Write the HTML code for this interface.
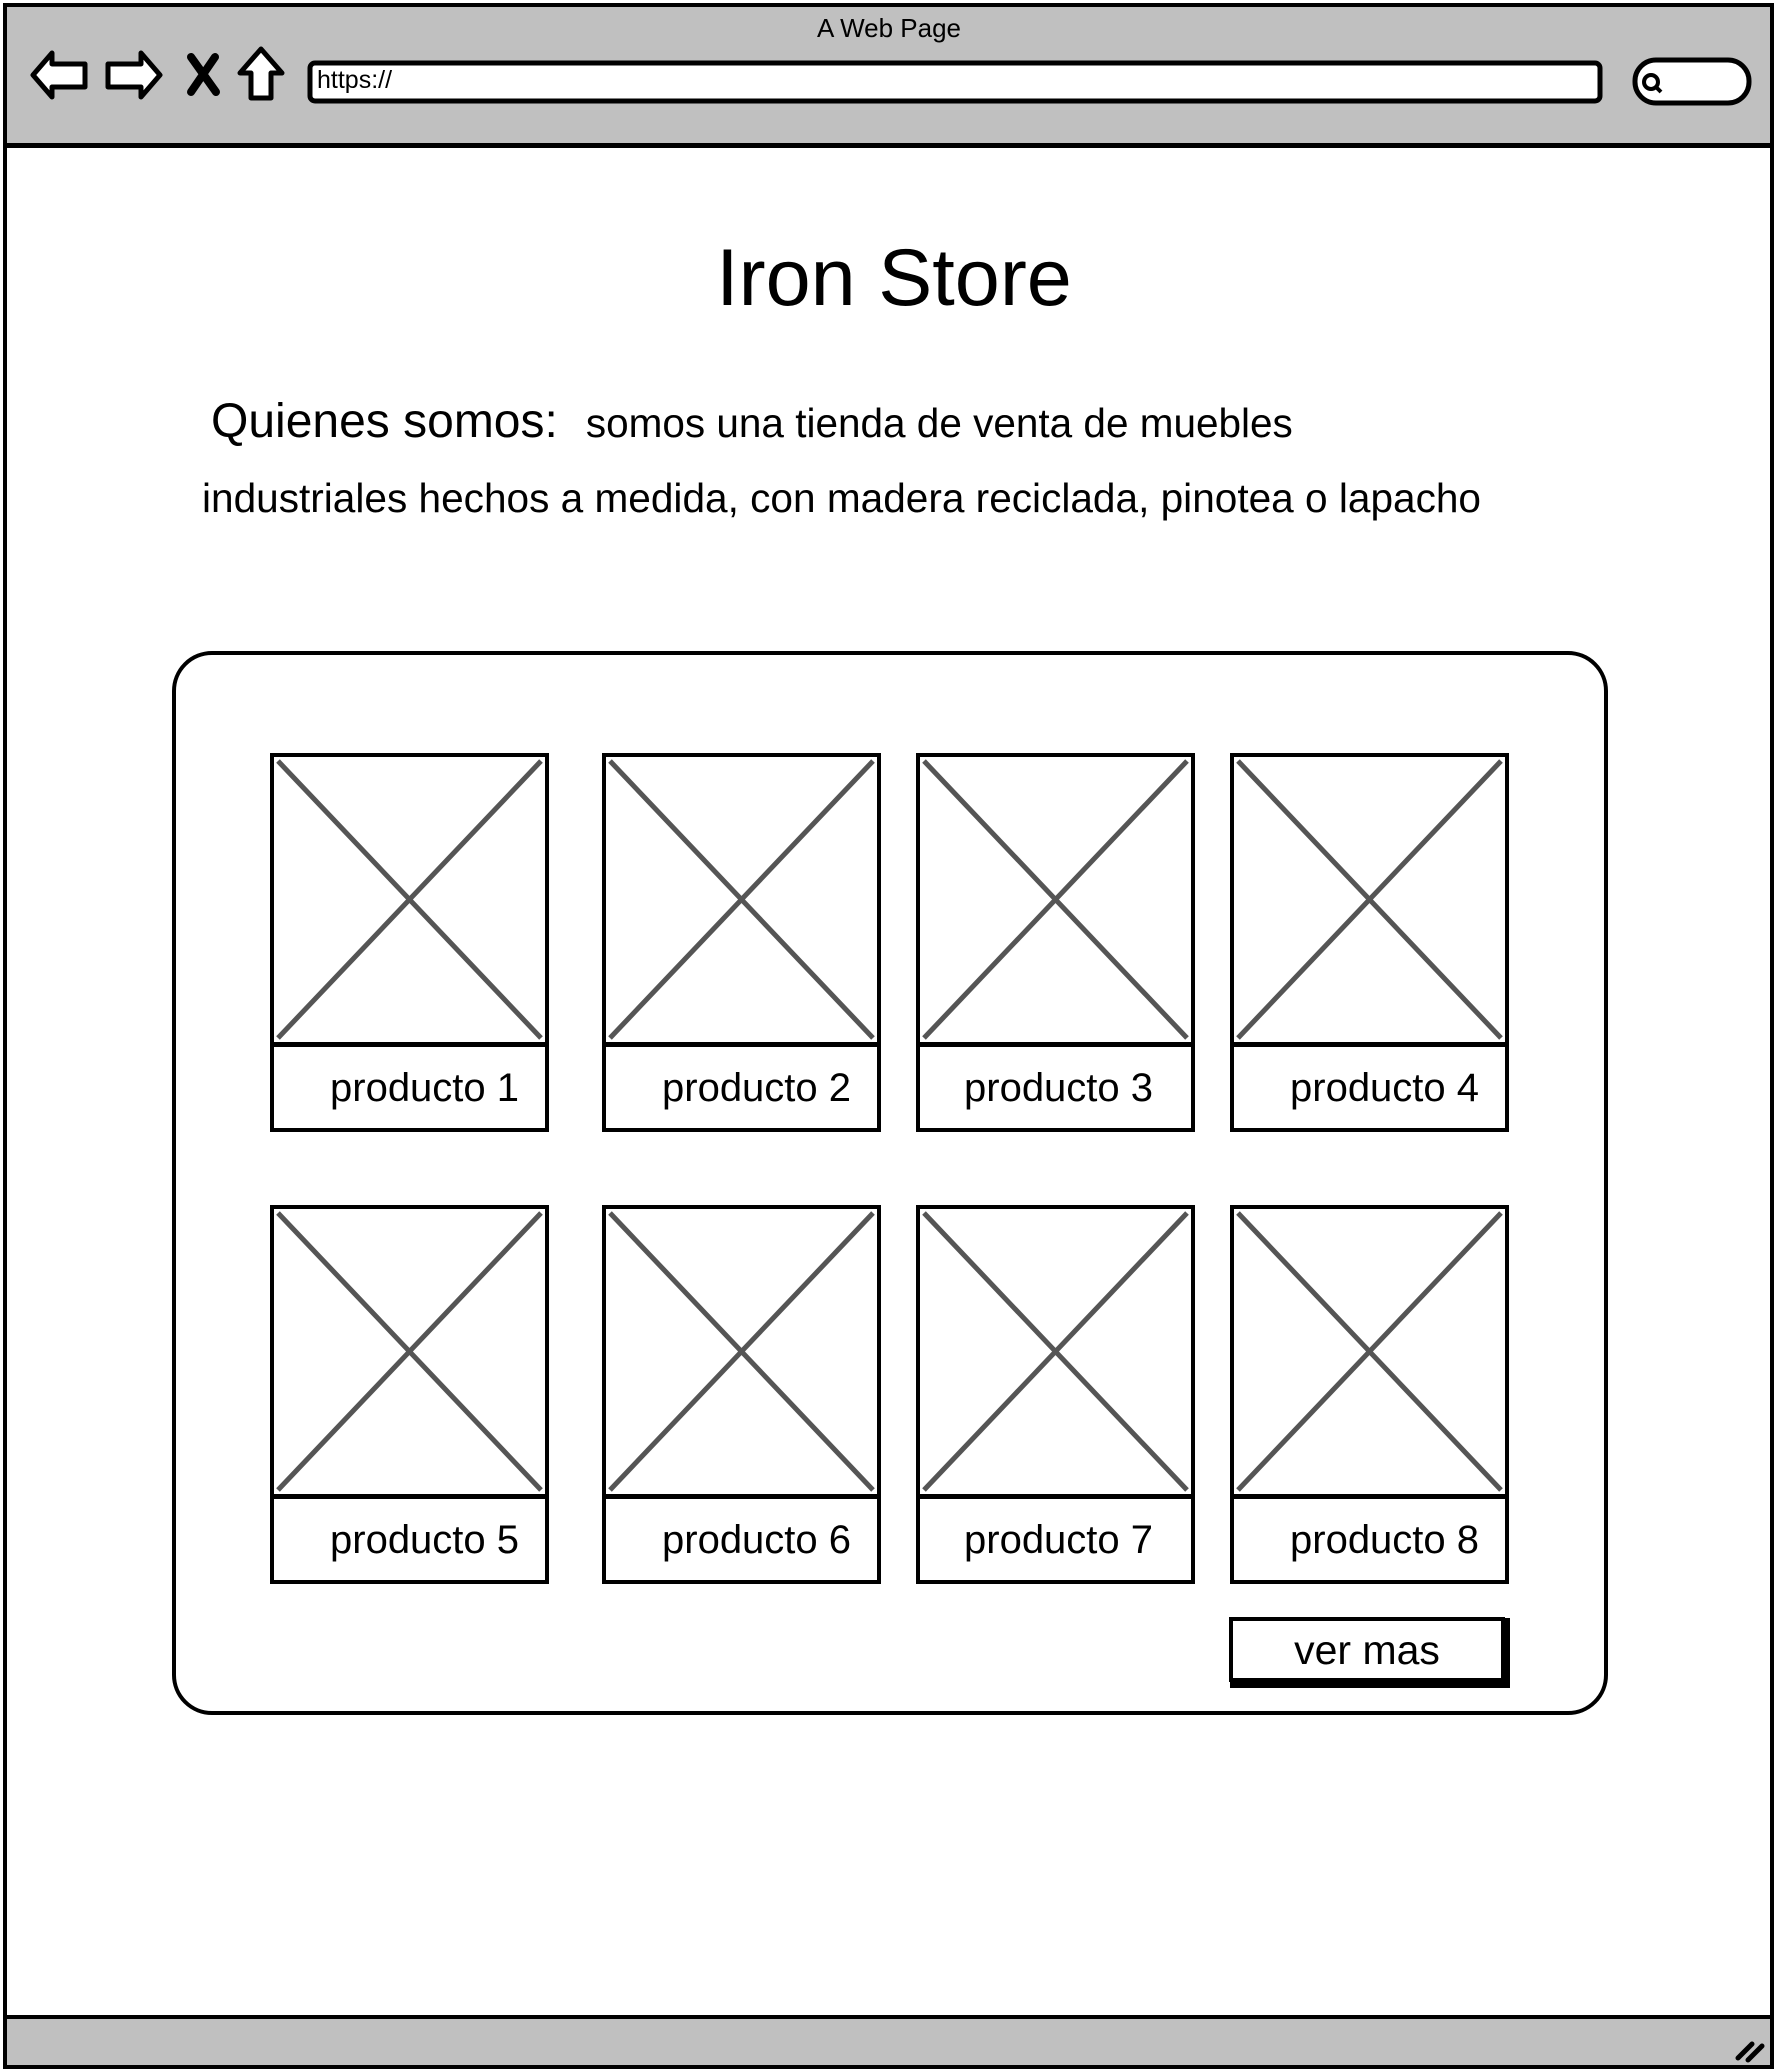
<!DOCTYPE html>
<html><head><meta charset="utf-8"><style>
*{margin:0;padding:0;box-sizing:border-box}
body{width:1778px;height:2072px;background:#fff;position:relative;overflow:hidden;font-family:"Liberation Sans",sans-serif;color:#000}
.a{position:absolute}
.card{position:absolute;width:279px}
.img{position:absolute;left:0;top:0;width:279px;height:293px;border:4px solid #000;background:#fff}
.lab{position:absolute;left:0;top:291px;width:279px;height:88px;border:4px solid #000;border-top-width:3px;font-size:40px;line-height:82px;padding-left:56px;white-space:nowrap}
</style></head><body>
<div class="a" style="left:3px;top:3px;width:1771px;height:2066px;border:4px solid #000;background:#fff"></div>
<div class="a" style="left:3px;top:3px;width:1771px;height:145px;border:4px solid #000;border-bottom-width:5px;background:#c0c0c0"></div>
<div class="a" style="left:3px;top:2015px;width:1771px;height:54px;border:4px solid #000;background:#c0c0c0"></div>
<div class="a" style="left:0;top:13px;width:1778px;text-align:center;font-size:26px">A Web Page</div>
<svg class="a" style="left:0;top:0" width="1778" height="2072">
<g fill="#fff" stroke="#000" stroke-width="5" stroke-linejoin="round">
<path d="M33 75 L52 53 L52 64 L85 64 L85 87 L52 87 L52 97 Z"/>
<path d="M160 75 L141 53 L141 64 L108 64 L108 87 L141 87 L141 97 Z"/>
<path d="M261 49 L282 73 L271 73 L271 98 L251 98 L251 73 L240 73 Z"/>
</g>
<path d="M191 57 L216 92 M215 57 L191 92" stroke="#000" stroke-width="8" stroke-linecap="round"/>
<rect x="310" y="63" width="1290" height="38" rx="5" fill="#fff" stroke="#000" stroke-width="5"/>
<rect x="1635" y="60" width="114" height="43" rx="21" fill="#fff" stroke="#000" stroke-width="5"/>
<circle cx="1651" cy="82" r="7" fill="none" stroke="#000" stroke-width="4"/>
<path d="M1655 86 L1661 92" stroke="#000" stroke-width="4"/>
<path d="M1738 2058 L1752 2044 M1748 2060 L1762 2046" stroke="#000" stroke-width="5" stroke-linecap="round"/>
<rect x="174" y="653" width="1432" height="1060" rx="38" fill="none" stroke="#000" stroke-width="4"/>
</svg>
<div class="a" style="left:317px;top:66px;font-size:25px">https://</div>
<div class="a" style="left:0;top:228px;width:1788px;text-align:center;font-size:81px;line-height:100px">Iron Store</div>
<div class="a" style="left:211px;top:392px;font-size:48px;line-height:60px;white-space:nowrap">Quienes somos:<span style="font-size:40.5px;margin-left:28px">somos una tienda de venta de muebles</span></div>
<div class="a" style="left:202px;top:473px;font-size:40.6px;line-height:50px;white-space:nowrap">industriales hechos a medida, con madera reciclada, pinotea o lapacho</div>

<div class="a" style="left:1230px;top:1618px;width:280px;height:70px;background:#000"></div>
<div class="a" style="left:1229px;top:1617px;width:276px;height:65px;border:4px solid #000;background:#fff;font-size:41px;text-align:center;line-height:58px">ver mas</div>

<svg width="0" height="0" style="position:absolute"><defs><g id="x"><path d="M8 8 L271 285 M271 8 L8 285" stroke="#555" stroke-width="5"/></g></defs></svg>

<div class="card" style="left:270px;top:753px"><div class="img"><svg width="279" height="293" style="position:absolute;left:-4px;top:-4px"><use href="#x"/></svg></div><div class="lab">producto 1</div></div>
<div class="card" style="left:602px;top:753px"><div class="img"><svg width="279" height="293" style="position:absolute;left:-4px;top:-4px"><use href="#x"/></svg></div><div class="lab">producto 2</div></div>
<div class="card" style="left:916px;top:753px"><div class="img"><svg width="279" height="293" style="position:absolute;left:-4px;top:-4px"><use href="#x"/></svg></div><div class="lab" style="padding-left:44px">producto 3</div></div>
<div class="card" style="left:1230px;top:753px"><div class="img"><svg width="279" height="293" style="position:absolute;left:-4px;top:-4px"><use href="#x"/></svg></div><div class="lab">producto 4</div></div>
<div class="card" style="left:270px;top:1205px"><div class="img"><svg width="279" height="293" style="position:absolute;left:-4px;top:-4px"><use href="#x"/></svg></div><div class="lab">producto 5</div></div>
<div class="card" style="left:602px;top:1205px"><div class="img"><svg width="279" height="293" style="position:absolute;left:-4px;top:-4px"><use href="#x"/></svg></div><div class="lab">producto 6</div></div>
<div class="card" style="left:916px;top:1205px"><div class="img"><svg width="279" height="293" style="position:absolute;left:-4px;top:-4px"><use href="#x"/></svg></div><div class="lab" style="padding-left:44px">producto 7</div></div>
<div class="card" style="left:1230px;top:1205px"><div class="img"><svg width="279" height="293" style="position:absolute;left:-4px;top:-4px"><use href="#x"/></svg></div><div class="lab">producto 8</div></div>
</body></html>
